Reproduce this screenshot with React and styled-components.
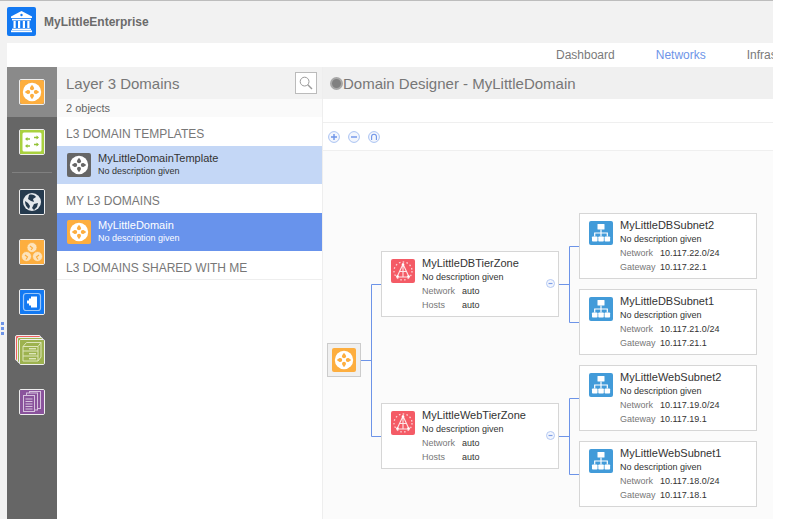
import React from 'react'
import styled, { createGlobalStyle } from 'styled-components'

const GlobalStyle = createGlobalStyle`
html, body { margin: 0; padding: 0; background: #fff; }
body { font-family: "Liberation Sans", Arial, sans-serif; }
* { box-sizing: border-box; }
`

const Page = styled.div`
position: relative;
width: 773px;
height: 519px;
overflow: hidden;
background: #f2f2f2;
border-top: 1px solid #bdbdbd;
display: flex;
flex-direction: column;
`
const TopBar = styled.div`
height: 42px;
flex: none;
display: flex;
align-items: center;
gap: 8px;
padding: 0 0 1px 7px;
`
const BrandName = styled.span`
font-size: 12px;
font-weight: bold;
color: #6b6b6b;
`
const Shell = styled.div`
flex: 1;
margin-left: 7px;
display: flex;
flex-direction: column;
min-height: 0;
`
const Nav = styled.nav`
height: 24px;
flex: none;
background: #fff;
display: flex;
align-items: center;
gap: 41px;
padding-left: 549px;
overflow: hidden;
white-space: nowrap;
`
const NavItem = styled.span`
font-size: 12px;
color: ${p => (p.$active ? '#6d94e8' : '#7a7a7a')};
`
const Body = styled.div`
flex: 1;
display: flex;
min-height: 0;
`
const Sidebar = styled.aside`
width: 50px;
flex: none;
background: #666;
display: flex;
flex-direction: column;
`
const SideItem = styled.div`
height: 50px;
display: flex;
align-items: center;
justify-content: center;
background: ${p => (p.$active ? '#8a8a8a' : 'transparent')};
`
const SideRule = styled.div`
height: 1px;
margin: 5px 5px 4px;
background: #808080;
`
const SideTile = styled.div`
width: 26px;
height: 26px;
border: 1px solid #eee;
border-radius: 2px;
overflow: hidden;
line-height: 0;
`
const Stack = styled.div`
position: relative;
width: 30px;
height: 30px;
margin: 0 4px 4px 0;
`
const StackLayer = styled.div`
position: absolute;
left: ${p => p.$at}px;
top: ${p => p.$at}px;
width: 26px;
height: 26px;
border: 1px solid #eee;
border-radius: 2px;
background: ${p => p.$color};
`
const StackFront = styled(SideTile)`
position: absolute;
right: 0;
bottom: 0;
`
const ListPanel = styled.section`
width: 266px;
flex: none;
background: #fff;
border-right: 1px solid #eee;
display: flex;
flex-direction: column;
`
const PanelHead = styled.header`
height: 32px;
flex: none;
background: #f2f2f2;
display: flex;
align-items: center;
justify-content: space-between;
padding: 0 5px 0 9px;
`
const PanelTitle = styled.h2`
margin: 0;
font-size: 15px;
font-weight: 400;
color: #777;
`
const SearchButton = styled.div`
width: 22px;
height: 22px;
background: #fff;
border: 1px solid #bbb;
display: flex;
align-items: center;
justify-content: center;
`
const CountBar = styled.div`
height: 18px;
background: #fafafa;
padding-left: 9px;
font-size: 11px;
line-height: 19px;
color: #666;
`
const SectionLabel = styled.div`
height: 29px;
padding-left: 9px;
font-size: 12px;
line-height: 34px;
color: #777;
`
const SectionEnd = styled(SectionLabel)`
border-bottom: 1px solid #eee;
`
const ListRow = styled.div`
height: 38px;
display: flex;
align-items: center;
gap: 7px;
padding-left: 10px;
background: ${p => (p.$selected ? '#6893ec' : '#c4d7f6')};
color: ${p => (p.$selected ? '#fff' : '#333')};
`
const RowText = styled.div`
display: flex;
flex-direction: column;
margin-top: -1px;
`
const RowName = styled.span`
font-size: 11px;
line-height: 13px;
`
const RowDesc = styled.span`
font-size: 9px;
line-height: 12px;
`
const Designer = styled.section`
flex: 1;
min-width: 0;
background: #fff;
display: flex;
flex-direction: column;
`
const DesignerHead = styled.header`
height: 32px;
flex: none;
background: #f0f0f0;
display: flex;
align-items: center;
padding-left: 7px;
`
const StatusDot = styled.span`
width: 13px;
height: 13px;
flex: none;
border-radius: 50%;
background: #808080;
border: 2px solid #a8a8a8;
`
const Spacer = styled.div`
height: 24px;
flex: none;
border-bottom: 1px solid #efefef;
`
const Toolbar = styled.div`
height: 28px;
flex: none;
display: flex;
align-items: center;
gap: 8px;
padding: 0 0 0 5px;
border-bottom: 1px solid #efefef;
`
const Canvas = styled.div`
position: relative;
flex: 1;
background: #fbfbfb;
`
const Wires = styled.svg`
position: absolute;
left: 0;
top: 0;
`
const RootNode = styled.div`
position: absolute;
left: 4px;
top: 192px;
width: 34px;
height: 34px;
background: #f0f0f0;
border: 1px solid #ccc;
display: flex;
align-items: center;
justify-content: center;
`
const Card = styled.div`
position: absolute;
left: ${p => p.$x}px;
top: ${p => p.$y}px;
width: 178px;
height: 66px;
background: #fff;
border: 1px solid #d6d6d6;
display: flex;
gap: 7px;
padding: 7px 0 0 9px;
`
const CardText = styled.div`
display: flex;
flex-direction: column;
margin-top: -3px;
`
const CardName = styled.div`
font-size: 11px;
line-height: 14px;
color: #333;
`
const CardLine = styled.div`
display: flex;
font-size: 9px;
line-height: 14px;
color: #333;
`
const CardLabel = styled.span`
width: 40px;
color: #777;
`
const Collapse = styled.div`
position: absolute;
right: 3px;
top: 27px;
line-height: 0;
`
const DragDot = styled.span`
position: absolute;
left: 1px;
top: ${p => p.$y}px;
width: 3px;
height: 3px;
background: #6d94e8;
`

const DomainIcon = ({ bg = '#fdae3f', size = 24 }) => (
  <svg width={size} height={size} viewBox="0 0 24 24" style={{ display: 'block', borderRadius: 2 }}>
    <rect width="24" height="24" fill={bg} />
    <circle cx="12" cy="12" r="9.2" fill="#fff" />
    <g fill={bg}>
      <path d="M12 4.8 C13.4 6.6 14 7.4 14 8.2 A2 2 0 0 1 10 8.2 C10 7.4 10.6 6.6 12 4.8 Z" />
      <path d="M12 19.2 C13.4 17.4 14 16.6 14 15.8 A2 2 0 0 0 10 15.8 C10 16.6 10.6 17.4 12 19.2 Z" />
      <path d="M4.8 12 C6.6 13.4 7.4 14 8.2 14 A2 2 0 0 0 8.2 10 C7.4 10 6.6 10.6 4.8 12 Z" />
      <path d="M19.2 12 C17.4 13.4 16.6 14 15.8 14 A2 2 0 0 1 15.8 10 C16.6 10 17.4 10.6 19.2 12 Z" />
    </g>
  </svg>
)

const BankLogo = () => (
  <svg width="29" height="29" viewBox="0 0 29 29" style={{ flex: 'none' }}>
    <rect width="29" height="29" rx="2" fill="#1379f2" />
    <g fill="#fff">
      <path d="M14.5 4 L25 9.6 V11 H4 V9.6 Z" />
      <rect x="5" y="11.8" width="19" height="1.6" />
      <rect x="6.5" y="14" width="2.2" height="7" />
      <rect x="11" y="14" width="2.2" height="7" />
      <rect x="15.8" y="14" width="2.2" height="7" />
      <rect x="20.3" y="14" width="2.2" height="7" />
      <rect x="5" y="21.6" width="19" height="1.4" />
      <rect x="4" y="23.4" width="21" height="1.8" />
    </g>
    <circle cx="14.5" cy="8" r="1.2" fill="#1379f2" />
  </svg>
)

const GreenFlowIcon = () => (
  <svg width="24" height="24" viewBox="0 0 24 24" style={{ display: 'block' }}>
    <rect width="24" height="24" fill="#a9d13f" />
    <rect x="2.5" y="2.5" width="19" height="19" rx="1.5" fill="#fff" />
    <g fill="none" stroke="#93c236" strokeWidth="1.6">
      <path d="M6 9 H10 M14 7.5 H18 M6 16 H10 M14 14.5 H18" />
    </g>
    <g fill="#93c236">
      <path d="M5 9 L7.5 7 V11 Z M19 7.5 L16.5 5.5 V9.5 Z M5 16 L7.5 14 V18 Z M19 14.5 L16.5 12.5 V16.5 Z" />
    </g>
  </svg>
)

const GlobeIcon = () => (
  <svg width="24" height="24" viewBox="0 0 24 24" style={{ display: 'block' }}>
    <rect width="24" height="24" fill="#253a4e" />
    <circle cx="12" cy="12" r="9" fill="#e4e8ec" />
    <path d="M9 5 C12 4 15 5 16 7 L13 9 L14 12 L11 11 L8 9 Z M14 14 L18 13 L17 17 L14 20 L12 18 Z M5 11 L8 13 L10 16 L9 19 C6 17 5 14 5 11 Z" fill="#253a4e" />
  </svg>
)

const CloudsIcon = () => (
  <svg width="24" height="24" viewBox="0 0 24 24" style={{ display: 'block' }}>
    <rect width="24" height="24" fill="#fdae3f" />
    <g fill="#fde3bb" stroke="#fdae3f" strokeWidth="0.8">
      <circle cx="12" cy="7.5" r="5" />
      <circle cx="6.5" cy="16.5" r="5" />
      <circle cx="17.5" cy="16.5" r="5" />
    </g>
    <g fill="none" stroke="#fdae3f" strokeWidth="1.2">
      <path d="M10 6 L12.5 8 L11 10 M5 15 L7.5 17 L6 19.5 M19 15 L16.5 17 L18 19.5" />
    </g>
  </svg>
)

const PlugIcon = () => (
  <svg width="24" height="24" viewBox="0 0 24 24" style={{ display: 'block' }}>
    <rect width="24" height="24" fill="#1379f2" />
    <rect x="3.5" y="3.5" width="17" height="17" rx="2.5" fill="none" stroke="#9cc8fa" strokeWidth="1.2" />
    <path d="M11 6.5 H17 V17.5 H11 V15.5 H9 V13.5 H7 V10.5 H9 V8.5 H11 Z" fill="#fff" />
  </svg>
)

const RackIcon = () => (
  <svg width="24" height="24" viewBox="0 0 24 24" style={{ display: 'block' }}>
    <rect width="24" height="24" fill="#9db24f" />
    <g fill="none" stroke="#dde5bb" strokeWidth="1">
      <path d="M3 6.5 L6.5 2.5 H21 V17 L18 21 H3 Z M3 6.5 H18 V21 M18 6.5 L21 2.5" />
      <path d="M3 11 H18 M3 16 H18" />
    </g>
    <g fill="#dde5bb">
      <rect x="9" y="8" width="7" height="1.4" />
      <rect x="9" y="13" width="7" height="1.4" />
      <rect x="9" y="18" width="7" height="1.4" />
    </g>
  </svg>
)

const DocsIcon = () => (
  <svg width="24" height="24" viewBox="0 0 24 24" style={{ display: 'block' }}>
    <rect width="24" height="24" fill="#8a539c" />
    <g fill="#8a539c" stroke="#d6c2dd" strokeWidth="1">
      <rect x="9.5" y="1.5" width="11" height="17" />
      <rect x="6.5" y="3" width="11" height="17" />
      <rect x="3.5" y="5.5" width="11" height="16" />
    </g>
    <path d="M5.5 9 H12.5 M5.5 11.5 H12.5 M5.5 14 H12.5 M5.5 16.5 H12.5 M5.5 19 H12.5" stroke="#d6c2dd" strokeWidth="1.1" />
  </svg>
)

const SearchIcon = () => (
  <svg width="14" height="14" viewBox="0 0 14 14" fill="none" stroke="#9a9a9a" strokeWidth="1">
    <circle cx="5.6" cy="5.6" r="4.4" />
    <path d="M8.8 8.8 L13 13" strokeWidth="1.4" />
  </svg>
)

const ZoneIcon = () => (
  <svg width="24" height="24" viewBox="0 0 24 24" style={{ display: 'block', flex: 'none', borderRadius: 2 }}>
    <rect width="24" height="24" fill="#f45b66" />
    <circle cx="12" cy="12" r="9" fill="none" stroke="#fbd0d4" strokeWidth="1.3" strokeDasharray="1.6 2.2" />
    <path d="M12 5 L18 18 H6 Z M9 12.5 H15 M12 5 V18" fill="none" stroke="#fde6e8" strokeWidth="1.1" />
    <g fill="#fff">
      <circle cx="12" cy="5.5" r="1.3" />
      <circle cx="6.5" cy="17.5" r="1.3" />
      <circle cx="17.5" cy="17.5" r="1.3" />
    </g>
  </svg>
)

const SubnetIcon = () => (
  <svg width="24" height="24" viewBox="0 0 24 24" style={{ display: 'block', flex: 'none', borderRadius: 2 }}>
    <rect width="24" height="24" fill="#429bd9" />
    <g fill="#fff">
      <rect x="8.5" y="3" width="7" height="5.5" rx="0.6" />
      <rect x="3" y="15.5" width="5.5" height="5" rx="0.8" />
      <rect x="9.3" y="15.5" width="5.5" height="5" rx="0.8" />
      <rect x="15.6" y="15.5" width="5.5" height="5" rx="0.8" />
    </g>
    <path d="M12 8.5 V15.5 M5.7 15.5 V12 H18.3 V15.5" fill="none" stroke="#fff" strokeWidth="1.2" />
  </svg>
)

const RoundTool = ({ children }) => (
  <svg width="12" height="12" viewBox="0 0 12 12" style={{ display: 'block' }}>
    <circle cx="6" cy="6" r="5.4" fill="#f3f6fd" stroke="#a9c2f2" strokeWidth="1" />
    <g fill="none" stroke="#6d94e8" strokeWidth="1.4">{children}</g>
  </svg>
)

const zones = [
  { name: 'MyLittleDBTierZone', x: 58, y: 100 },
  { name: 'MyLittleWebTierZone', x: 58, y: 252 },
]

const subnets = [
  { name: 'MyLittleDBSubnet2', net: '10.117.22.0/24', gw: '10.117.22.1', y: 62 },
  { name: 'MyLittleDBSubnet1', net: '10.117.21.0/24', gw: '10.117.21.1', y: 138 },
  { name: 'MyLittleWebSubnet2', net: '10.117.19.0/24', gw: '10.117.19.1', y: 214 },
  { name: 'MyLittleWebSubnet1', net: '10.117.18.0/24', gw: '10.117.18.1', y: 290 },
]

const wires = [
  'M38 209.5 H48.5',
  'M58 133.5 H48.5 V285.5 H58',
  'M236 133.5 H246.5',
  'M256 95.5 H246.5 V171.5 H256',
  'M236 285.5 H246.5',
  'M256 247.5 H246.5 V323.5 H256',
]

export default function App() {
  return (
    <Page>
      <GlobalStyle />
      <TopBar>
        <BankLogo />
        <BrandName>MyLittleEnterprise</BrandName>
      </TopBar>
      <Shell>
        <Nav>
          <NavItem>Dashboard</NavItem>
          <NavItem $active>Networks</NavItem>
          <NavItem>Infrastructure</NavItem>
        </Nav>
        <Body>
          <Sidebar>
            <SideItem $active><SideTile><DomainIcon /></SideTile></SideItem>
            <SideItem><SideTile><GreenFlowIcon /></SideTile></SideItem>
            <SideRule />
            <SideItem><SideTile><GlobeIcon /></SideTile></SideItem>
            <SideItem><SideTile><CloudsIcon /></SideTile></SideItem>
            <SideItem><SideTile><PlugIcon /></SideTile></SideItem>
            <SideItem>
              <Stack>
                <StackLayer $at={0} $color="#f0625f" />
                <StackLayer $at={2} $color="#9db24f" />
                <StackFront><RackIcon /></StackFront>
              </Stack>
            </SideItem>
            <SideItem><SideTile><DocsIcon /></SideTile></SideItem>
          </Sidebar>
          <ListPanel>
            <PanelHead>
              <PanelTitle>Layer 3 Domains</PanelTitle>
              <SearchButton><SearchIcon /></SearchButton>
            </PanelHead>
            <CountBar>2 objects</CountBar>
            <SectionLabel>L3 DOMAIN TEMPLATES</SectionLabel>
            <ListRow>
              <DomainIcon bg="#666" />
              <RowText>
                <RowName>MyLittleDomainTemplate</RowName>
                <RowDesc>No description given</RowDesc>
              </RowText>
            </ListRow>
            <SectionLabel>MY L3 DOMAINS</SectionLabel>
            <ListRow $selected>
              <DomainIcon />
              <RowText>
                <RowName>MyLittleDomain</RowName>
                <RowDesc>No description given</RowDesc>
              </RowText>
            </ListRow>
            <SectionEnd>L3 DOMAINS SHARED WITH ME</SectionEnd>
          </ListPanel>
          <Designer>
            <DesignerHead>
              <StatusDot />
              <PanelTitle>Domain Designer - MyLittleDomain</PanelTitle>
            </DesignerHead>
            <Spacer />
            <Toolbar>
              <RoundTool><path d="M3 6 H9 M6 3 V9" /></RoundTool>
              <RoundTool><path d="M3 6 H9" /></RoundTool>
              <RoundTool><path d="M3.6 9 V5.6 A2.4 2.4 0 0 1 8.4 5.6 V9" strokeWidth="1.1" /></RoundTool>
            </Toolbar>
            <Canvas>
              <Wires width="450" height="368" fill="none" stroke="#6d94e8" strokeWidth="1">
                {wires.map(d => <path key={d} d={d} />)}
              </Wires>
              <RootNode><DomainIcon /></RootNode>
              {zones.map(z => (
                <Card key={z.name} $x={z.x} $y={z.y}>
                  <ZoneIcon />
                  <CardText>
                    <CardName>{z.name}</CardName>
                    <CardLine>No description given</CardLine>
                    <CardLine><CardLabel>Network</CardLabel>auto</CardLine>
                    <CardLine><CardLabel>Hosts</CardLabel>auto</CardLine>
                  </CardText>
                  <Collapse>
                    <svg width="9" height="9" viewBox="0 0 9 9">
                      <circle cx="4.5" cy="4.5" r="4" fill="#f3f6fd" stroke="#b4c9f3" />
                      <path d="M2.5 4.5 H6.5" stroke="#7f9fe8" strokeWidth="1.2" />
                    </svg>
                  </Collapse>
                </Card>
              ))}
              {subnets.map(s => (
                <Card key={s.name} $x={256} $y={s.y}>
                  <SubnetIcon />
                  <CardText>
                    <CardName>{s.name}</CardName>
                    <CardLine>No description given</CardLine>
                    <CardLine><CardLabel>Network</CardLabel>{s.net}</CardLine>
                    <CardLine><CardLabel>Gateway</CardLabel>{s.gw}</CardLine>
                  </CardText>
                </Card>
              ))}
            </Canvas>
          </Designer>
        </Body>
      </Shell>
      <DragDot $y={321} />
      <DragDot $y={326} />
      <DragDot $y={331} />
    </Page>
  )
}
